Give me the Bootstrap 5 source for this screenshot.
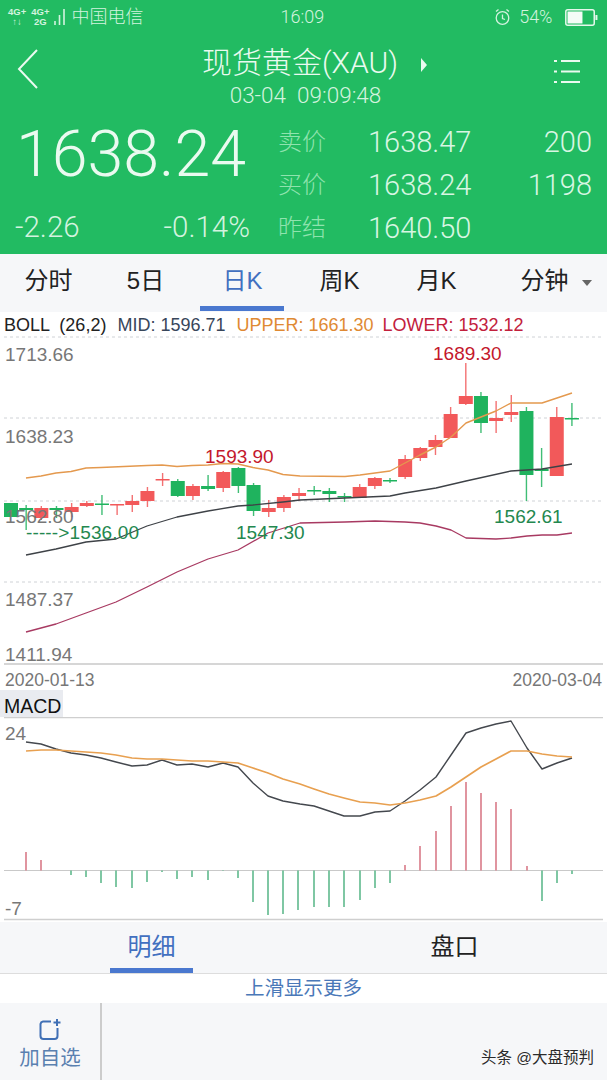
<!DOCTYPE html>
<html lang="zh-CN">
<head>
  <meta charset="UTF-8" />
  <meta name="viewport" content="width=device-width, initial-scale=1.0"/>
  <title>现货黄金(XAU)</title>
  <link href="https://cdn.jsdelivr.net/npm/bootstrap@5.3.0/dist/css/bootstrap.min.css" rel="stylesheet"/>
  <style>
    html, body { height: 1080px; overflow: hidden; }
    body {
      font-family: "Liberation Sans", "Noto Sans CJK SC", sans-serif;
      background: #fff;
      color: #222;
      width: 607px;
    }
    .quote-head {
      background: #22bb62;
      color: #eafaf0;
      height: 254px;
      font-family: Roboto, "Noto Sans CJK SC", sans-serif;
      font-weight: 300;
    }
    .status-row { height: 30px; padding: 4px 9px 0 8px; font-size: 18px; color: #d3f3df; line-height: 24px; }
    .carrier-box { width: 273px; gap: 5px; }
    .time-box { width: 214px; }
    .batt-text { width: 46px; }
    .sig-text { font-size: 9.5px; line-height: 10px; font-weight: 700; font-family: "Liberation Sans", sans-serif; text-align: center; }
    .title-row { height: 91px; padding: 0 27px 0 17px; }
    .back-icon { margin-top: 19px; }
    .title-box { padding-left: 36px; }
    .title-main { font-size: 30px; line-height: 40px; margin-top: 13px; white-space: nowrap; }
    .title-arrow {
      display: inline-block; width: 0; height: 0; margin-left: 23px; vertical-align: 1px;
      border-left: 6px solid #eafaf0; border-top: 7px solid transparent; border-bottom: 7px solid transparent;
    }
    .title-date { font-size: 22.5px; line-height: 28px; margin: -2px 18px 0 0; color: #d3f3df; white-space: pre; }
    .menu-icon { margin-top: 29px; }
    .quote-body { padding: 0 15px; }
    .quote-left { width: 263px; }
    .big-price { font-size: 64.5px; line-height: 66px; margin: 0 0 19px 1px; }
    .change-row { font-size: 29.5px; line-height: 43px; padding-right: 28px; color: #d3f3df; }
    .quote-line { height: 43px; line-height: 43px; font-size: 29px; }
    .quote-label { width: 90px; font-size: 24px; color: #8fe3ae; }
    .quote-val { width: 112px; color: #d8f6e3; }
    .quote-qty { flex: 1; text-align: right; color: #d8f6e3; }
    .period-tabs { height: 58px; background: #f6f7f9; flex-wrap: nowrap; }
    .period-tabs .nav-link {
      width: 97px; height: 58px; padding: 0; text-align: center; line-height: 54px;
      color: #222; font-size: 24px; position: relative;
    }
    .period-tabs .nav-link:last-child { width: 122px; padding-left: 20px; }
    .period-tabs .nav-link.active { color: #4270c0; }
    .period-tabs .nav-link.active::after, .detail-tabs .nav-link.active::after {
      content: ""; position: absolute; bottom: 1px; height: 5px; background: #4a78cf;
    }
    .period-tabs .nav-link.active::after { left: 6px; width: 84px; }
    .tab-caret {
      display: inline-block; width: 0; height: 0; margin-left: 13px; vertical-align: 3px;
      border-top: 6px solid #666; border-left: 5px solid transparent; border-right: 5px solid transparent;
    }
    .legend-row { height: 23px; padding-left: 4px; font-size: 18px; line-height: 27px; white-space: pre; }
    .legend-mid { color: #38465a; margin-left: 11px; }
    .legend-up { color: #df8a33; margin-left: 11px; }
    .legend-low { color: #c2203c; margin-left: 9px; }
    .chart-svg { display: block; }
    .chart-svg text { font-family: "Liberation Sans", sans-serif; font-size: 19px; }
    .chart-svg text.date-label { font-size: 17.5px; }
    .macd-row { height: 27px; }
    .macd-tag { width: 63px; height: 27px; background: #e9ebf0; color: #111; font-size: 19.5px; line-height: 32px; padding-left: 4px; }
    .detail-tabs { height: 52px; background: #f6f7f9; border-bottom: 1px solid #ddd; flex-wrap: nowrap; }
    .detail-tabs .nav-link {
      width: 303px; height: 51px; padding: 0; text-align: center; line-height: 50px;
      font-size: 24px; color: #222; position: relative;
    }
    .detail-tabs .nav-link.active { color: #4270c0; }
    .detail-tabs .nav-link.active::after { left: 110px; width: 83px; bottom: 0; }
    .swipe-hint { height: 29px; line-height: 28px; text-align: center; font-size: 19.5px; color: #4a78b8; background: #fff; }
    .bottom-bar { height: 77px; background: #f6f7f9; }
    .add-cell { width: 102px; border-right: 2px solid #ccc; color: #5a80b0; font-size: 20.5px; line-height: 24px; padding-top: 15px; }
    .source-mark { font-size: 15.5px; line-height: 20px; color: #2b2b2b; padding: 0 13px 12px 0; text-shadow: 0 0 2px #fff; }
  </style>
</head>
<body>

<header class="quote-head">
  <div class="status-row d-flex align-items-center">
    <div class="carrier-box d-flex align-items-center">
      <div class="sig-text">4G+<br>↑↓</div>
      <div class="sig-text">4G+<br>2G</div>
      <svg width="12" height="18" viewBox="0 0 12 18"><g stroke="#d3f3df" stroke-width="1.6"><path d="M1 13v4M5.500 7v10M10 1v16"/></g></svg>
      <span>中国电信</span>
    </div>
    <div class="time-box">16:09</div>
    <svg class="me-2" width="17" height="18" viewBox="0 0 17 18" fill="none" stroke="#d3f3df" stroke-width="1.3"><circle cx="8.500" cy="10" r="6.300"/><path d="M8.500 6.500v4l2.500 1M2 3.500 4.500 1.500M15 3.500 12.500 1.500"/></svg>
    <span class="batt-text">54%</span>
    <svg width="33" height="17" viewBox="0 0 33 17"><rect x=".8" y=".8" width="28.500" height="15.400" rx="2" fill="none" stroke="#e6f8ec" stroke-width="1.500"/><rect x="2.500" y="2.500" width="15" height="12" fill="#f4fcf7"/><rect x="30.500" y="6" width="2" height="5" fill="#e6f8ec"/></svg>
  </div>
  <div class="title-row d-flex justify-content-between">
    <svg class="back-icon" width="22" height="40" viewBox="0 0 22 40" fill="none" stroke="#eafaf0" stroke-width="2"><path d="M20 1 2 20l18 19"/></svg>
    <div class="title-box text-center flex-grow-1">
      <div class="title-main">现货黄金(XAU)<span class="title-arrow"></span></div>
      <div class="title-date">03-04  09:09:48</div>
    </div>
    <svg class="menu-icon" width="26" height="24" viewBox="0 0 26 24" fill="none" stroke="#eafaf0" stroke-width="2"><path d="M0 2h3M7 2h19M0 12.500h3M7 12.500h19M0 23h3M7 23h19"/></svg>
  </div>
  <div class="quote-body d-flex">
    <div class="quote-left">
      <div class="big-price">1638.24</div>
      <div class="change-row d-flex justify-content-between"><span>-2.26</span><span>-0.14%</span></div>
    </div>
    <div class="flex-grow-1">
      <div class="quote-line d-flex"><span class="quote-label">卖价</span><span class="quote-val">1638.47</span><span class="quote-qty">200</span></div>
      <div class="quote-line d-flex"><span class="quote-label">买价</span><span class="quote-val">1638.24</span><span class="quote-qty">1198</span></div>
      <div class="quote-line d-flex"><span class="quote-label">昨结</span><span class="quote-val">1640.50</span></div>
    </div>
  </div>
</header>

<nav class="nav period-tabs">
  <a class="nav-link" href="#">分时</a>
  <a class="nav-link" href="#">5日</a>
  <a class="nav-link active" href="#">日K</a>
  <a class="nav-link" href="#">周K</a>
  <a class="nav-link" href="#">月K</a>
  <a class="nav-link" href="#">分钟<span class="tab-caret"></span></a>
</nav>

<div class="legend-row">BOLL  (26,2)<span class="legend-mid">MID: 1596.71</span><span class="legend-up">UPPER: 1661.30</span><span class="legend-low">LOWER: 1532.12</span></div>

<svg id="klineChart" class="chart-svg" width="607" height="355" viewBox="0 335 607 355">
  <g stroke="#cfd2d6" stroke-width="1" stroke-dasharray="3 3">
    <path d="M4 337H603M4 418H603M4 501H603M4 582H603"/>
  </g>
  <path d="M4 664H603" stroke="#c9c9c9" stroke-width="1.500"/>
  <g id="klineGroup"></g>
  <g fill="#777">
    <text x="5" y="361">1713.66</text>
    <text x="5" y="443">1638.23</text>
    <text x="5" y="523">1562.80</text>
    <text x="5" y="606">1487.37</text>
    <text x="5" y="661">1411.94</text>
    <text class="date-label" x="5" y="686">2020-01-13</text>
    <text class="date-label" x="602" y="686" text-anchor="end">2020-03-04</text>
  </g>
  <g fill="#c4172c">
    <text x="205" y="463">1593.90</text>
    <text x="433" y="360">1689.30</text>
  </g>
  <g fill="#23884f">
    <text x="494" y="523">1562.61</text>
    <text x="236" y="539">1547.30</text>
    <text x="26" y="539" textLength="113">-----&gt;1536.00</text>
  </g>
</svg>

<div class="macd-row"><div class="macd-tag">MACD</div></div>

<svg id="macdChart" class="chart-svg" width="607" height="205" viewBox="0 717 607 205">
  <path d="M4 717.500H603M4 919.500H603" stroke="#cfcfcf" stroke-width="1.500"/>
  <path d="M4 870.500H603" stroke="#c9c9c9" stroke-width="1"/>
  <g id="macdGroup"></g>
  <g fill="#777">
    <text x="5" y="740">24</text>
    <text x="5" y="915">-7</text>
  </g>
</svg>

<nav class="nav detail-tabs">
  <a class="nav-link active" href="#">明细</a>
  <a class="nav-link" href="#">盘口</a>
</nav>
<div class="swipe-hint">上滑显示更多</div>
<footer class="bottom-bar d-flex">
  <div class="add-cell text-center">
    <svg class="d-block mx-auto mb-1" width="24" height="24" viewBox="0 0 24 24" fill="none" stroke="#3f6fb5" stroke-width="2"><path d="M13 3.500H5a3 3 0 0 0-2.500 2.500v12a3 3 0 0 0 3 3h11a3 3 0 0 0 3-3V10"/><path d="M19 1v7M15.500 4.500h7"/></svg>
    加自选
  </div>
  <div class="flex-grow-1 d-flex justify-content-end align-items-end">
    <span class="source-mark">头条 @大盘预判</span>
  </div>
</footer>

<script>
const NS = 'http://www.w3.org/2000/svg';
const RED = '#f2595a';
const GREEN = '#1fb35e';

// [up?, wickTop, bodyTop, bodyBottom, wickBottom], y in page pixels
const candles = [
  [0,503,503,517,517],[0,505,508,510,530],[1,506,508,518,520],[0,506,508,510,518],
  [1,503,507,512,517],[1,501,503,506,507],[0,495,503.5,505,515],[1,504,504,505,515],
  [1,495,501,505,512],[1,487,491,501,507],[1,473,479,480,486],[0,479,481,496,497],
  [1,484,486,496,500],[0,475,486,489,491],[1,471,472,488,492],[0,467,468,486,493],
  [0,483,485,511,516],[1,500,508,512,517],[1,495,497,508,512],[1,488,493,496,501],
  [0,486,490,491,495],[0,488,491,494,502],[0,493,496,497,502],[1,484,487,498,498],
  [1,477,478,486,489],[0,478,480,481,483],[1,455,459,477,479],[1,447,448,458,461],
  [1,435,440,447,455],[1,407,414,438,438],[1,363,396,404,405],[0,392,396,423,433],
  [1,401,418,421,433],[1,395,412,415,422],[0,407,411,475,501],[0,448,469,471,487],
  [1,407,417,476,476],[0,403,418,419,426]
];
const upper = [[26,478],[41,476],[56,473],[71,471.5],[86,468],[101,467.5],[147,465.5],[162,465],[177,466.5],[192,465.5],[208,465],[223,463.5],[238,464],[253,467.500],[268,470],[283,474.5],[300,476],[345,476.5],[360,475],[390,471],[405,463],[420,455],[436,447],[451,437],[466,423],[481,417],[496,411],[511,403],[542,403],[557,398],[572,393]];
const mid = [[26,555],[56,549],[86,542],[116,539],[147,526],[177,517],[208,511],[238,506],[253,505],[283,502],[300,500],[345,498],[390,496],[405,493],[436,488],[466,481],[511,471],[542,469],[572,464]];
const lower = [[26,632],[56,624],[86,613],[116,602],[147,587],[177,572],[208,559],[238,550],[268,533],[300,523],[345,522],[375,521],[405,522],[420,523],[436,526],[451,530],[466,538],[496,539],[511,538],[527,536],[542,535],[557,535],[572,533]];

const dif = [[26,742],[41,744],[56,749],[71,753],[86,755],[101,758],[116,762],[132,766],[147,765],[162,760],[177,765],[192,764],[208,767],[223,763],[238,767],[253,783],[268,796],[283,801],[300,804],[314,806],[329,811],[344,816],[360,816],[375,812],[390,811],[405,801],[420,790],[436,777],[451,755],[466,733],[481,728],[496,724],[511,721],[527,748],[542,769],[557,763],[572,758]];
const dea = [[26,751],[41,750],[56,750],[71,751],[86,752],[101,753],[116,755],[132,758],[147,759],[162,759],[177,760],[192,761],[208,761],[223,762],[238,763],[253,768],[268,773],[283,779],[300,784],[314,789],[329,794],[344,798],[360,802],[375,803],[390,805],[405,803],[420,800],[436,796],[451,787],[466,777],[481,767],[496,759],[511,751],[527,751],[542,754],[557,756],[572,757]];
const bars = [[26,852],[41,860],[71,875],[86,877],[101,883],[116,887],[132,888],[147,882],[162,872],[177,879],[192,877],[208,880],[223,871],[238,878],[253,902],[268,915],[283,914],[298,910],[314,907],[329,907],[344,907],[360,900],[375,888],[390,883],[405,865],[420,846],[436,831],[451,806],[466,782],[481,793],[496,802],[511,809],[527,866],[542,901],[557,883],[572,874]];

function addEl(parent, tag, attrs) {
  const el = document.createElementNS(NS, tag);
  for (const key in attrs) el.setAttribute(key, attrs[key]);
  parent.appendChild(el);
}

function addLine(parent, pts, color, width) {
  addEl(parent, 'polyline', {
    points: pts.map(p => p.join(',')).join(' '),
    fill: 'none', stroke: color, 'stroke-width': width, 'stroke-linejoin': 'round'
  });
}

const klineGroup = document.getElementById('klineGroup');
candles.forEach((c, i) => {
  const x = 11 + i * 15.16;
  const color = c[0] ? RED : GREEN;
  addEl(klineGroup, 'path', { d: `M${x} ${c[1]}V${c[4]}`, stroke: color, 'stroke-width': 1.4, opacity: .85 });
  addEl(klineGroup, 'rect', { x: x - 7, y: c[2], width: 14, height: Math.max(c[3] - c[2], 1.5), fill: color });
});
addLine(klineGroup, upper, '#e4994e', 1.4);
addLine(klineGroup, mid, '#3e4247', 1.3);
addLine(klineGroup, lower, '#a83a62', 1.3);

const macdGroup = document.getElementById('macdGroup');
bars.forEach(b => {
  const up = b[1] < 870;
  addEl(macdGroup, 'path', { d: `M${b[0]} 870.5V${b[1]}`, stroke: up ? '#d97a88' : '#5fb98d', 'stroke-width': 1.6 });
});
addLine(macdGroup, dif, '#44484e', 1.4);
addLine(macdGroup, dea, '#e8a050', 1.7);
</script>

<script src="https://cdn.jsdelivr.net/npm/bootstrap@5.3.0/dist/js/bootstrap.bundle.min.js"></script>
</body>
</html>
